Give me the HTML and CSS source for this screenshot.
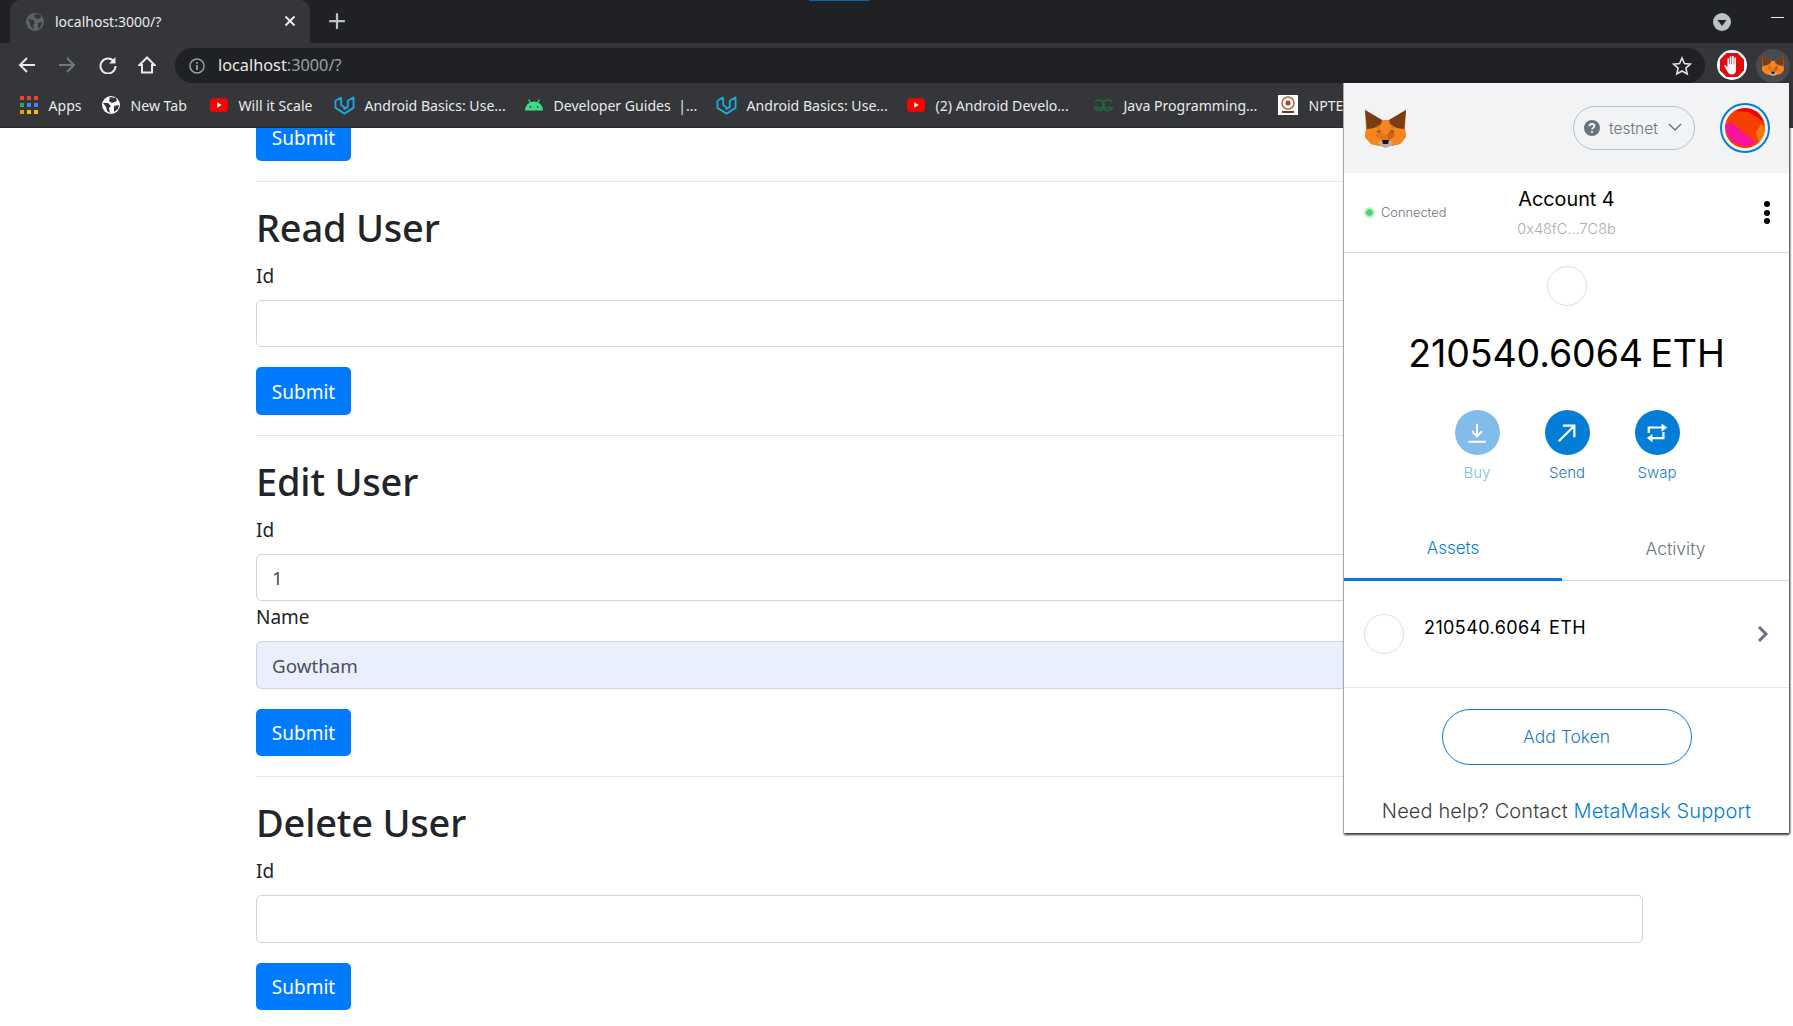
FILE: index.html
```html
<!DOCTYPE html>
<html lang="en">
<head>
<meta charset="utf-8">
<title>localhost:3000/?</title>
<link rel="stylesheet" href="styles.css">
</head>
<body>
<svg class="defs" width="0" height="0" aria-hidden="true">
  <symbol id="fox" viewBox="0 0 41 39">
    <polygon fill="#e2761b" points="0,1 17,11 24,11 41,1 40,20 41,28 35,35 26,37 15,37 6,35 0,28 1,20"/>
    <polygon fill="#f6851b" points="17,11 24,11 27,20 22,26 19,26 14,20"/>
    <polygon fill="#f6851b" points="1,21 11,18 14,21 11,27 17,31 15,37 6,35 0,28"/>
    <polygon fill="#f6851b" points="40,21 30,18 27,21 30,27 24,31 26,37 35,35 41,28"/>
    <polygon fill="#763d16" points="0,1 17,11 16,15 9,19 2,20"/>
    <polygon fill="#763d16" points="41,1 24,11 25,15 32,19 39,20"/>
    <polygon fill="#e4761b" points="11,27 17,31 19,26 14,20"/>
    <polygon fill="#cd6116" points="30,27 24,31 22,26 27,20"/>
    <polygon fill="#a05a22" points="11,22 15,21 16,23 13,24"/>
    <polygon fill="#a05a22" points="30,22 26,21 25,23 28,24"/>
    <polygon fill="#c0ad9e" points="13,33 17,31 24,31 28,33 26,37 20.500,39 15,37"/>
    <polygon fill="#161616" points="17,31 24,31 23,35 18,35"/>
  </symbol>
  <symbol id="yt" viewBox="0 0 20 16">
    <rect width="20" height="15" y=".5" rx="4" fill="#f00"/>
    <polygon points="8,5 8,11 13,8" fill="#fff"/>
  </symbol>
  <symbol id="uda" viewBox="0 0 22 20">
    <path d="M7.500 1.500L1.500 5v7.500L11 18.500l9.500-6V1.500l-6 3.500v6.500L10 14M7.500 1.500v8L12 13" fill="none" stroke="#1ba8d6" stroke-width="2" stroke-linejoin="round"/>
  </symbol>
</svg>

<header class="chrome">
  <div class="accent"></div>
  <div class="tabstrip">
    <div class="tab">
      <svg class="tab-fav" viewBox="0 0 18 18"><circle cx="9" cy="9" r="9" fill="#5f6368"/><path d="M2 6l5 1 2 3-2 2 1 4-3-2-1-4zM9 1l5 1 1 3-4 1-3-2zM12 10l4-1-1 4-3 3z" fill="#35363a"/></svg>
      <span class="tab-title">localhost:3000/?</span>
      <svg class="tab-close" viewBox="0 0 12 12"><path d="M1.500 1.500l9 9M10.500 1.500l-9 9" stroke="#e8eaed" stroke-width="2"/></svg>
    </div>
    <svg class="new-tab" viewBox="0 0 16 16"><path d="M8 1v14M1 8h14" stroke="#bdc1c6" stroke-width="2"/></svg>
    <svg class="tab-search" viewBox="0 0 18 18"><circle cx="9" cy="9" r="9" fill="#bdc1c6"/><polygon points="4.500,7 13.500,7 9,13" fill="#202124"/></svg>
    <div class="minimize"></div>
  </div>
  <div class="strip"></div>
  <div class="toolbar">
    <svg class="nav" viewBox="0 0 18 18"><path d="M17 9H3M9 2L2 9l7 7" fill="none" stroke="#e8eaed" stroke-width="2"/></svg>
    <svg class="nav" viewBox="0 0 18 18"><path d="M1 9h14M9 2l7 7-7 7" fill="none" stroke="#74777b" stroke-width="2"/></svg>
    <svg class="nav" viewBox="0 0 18 18"><path d="M15 5.500A7.500 7.500 0 1 0 16.500 10" fill="none" stroke="#e8eaed" stroke-width="2"/><polygon points="16.500,1 16.500,7.500 10,7.500" fill="#e8eaed"/></svg>
    <svg class="nav" viewBox="0 0 18 18"><path d="M9 1.500L1.500 9H4v7.500h10V9h2.500z" fill="none" stroke="#e8eaed" stroke-width="2"/></svg>
    <div class="omnibox">
      <svg class="info" viewBox="0 0 16 16"><circle cx="8" cy="8" r="7" fill="none" stroke="#9aa0a6" stroke-width="1.500"/><path d="M8 7v5M8 4v1.800" stroke="#9aa0a6" stroke-width="1.800"/></svg>
      <span class="url">localhost<span class="url-dim">:3000/?</span></span>
      <svg class="star" viewBox="0 0 20 20"><polygon points="10,2 12.400,7.500 18.400,8.100 13.900,12.100 15.200,18 10,15 4.800,18 6.100,12.100 1.600,8.100 7.600,7.500" fill="none" stroke="#e0e2e5" stroke-width="1.600"/></svg>
    </div>
    <svg class="ext-ab" viewBox="0 0 30 30">
      <circle cx="15" cy="15" r="15" fill="#fff"/>
      <polygon points="9.500,3 20.500,3 27,9.500 27,20.500 20.500,27 9.500,27 3,20.500 3,9.500" fill="#e20c0c"/>
      <path d="M10.500 8.500h1.600v6h.6V6.500h1.700v8h.6V6h1.700v8.500h.6V7.500h1.700V20c0 3-1.700 4.500-4.300 4.500-2.300 0-3.500-1.200-4.400-3.200L7 15.500l1.400-.7 2.100 3z" fill="#fff"/>
    </svg>
    <div class="ext-fox"><svg viewBox="0 0 41 39"><use href="#fox"/></svg></div>
  </div>
  <nav class="bookmarks">
    <div class="bm">
      <svg class="bm-ico" viewBox="0 0 18 18">
        <g fill="#ea4335"><rect width="4" height="4"/><rect x="7" width="4" height="4"/><rect x="14" width="4" height="4"/></g>
        <g fill="#4285f4"><rect y="7" width="4" height="4" fill="#34a853"/><rect x="7" y="7" width="4" height="4"/><rect x="14" y="7" width="4" height="4"/></g>
        <g fill="#fbbc04"><rect y="14" width="4" height="4" fill="#f29900"/><rect x="7" y="14" width="4" height="4"/><rect x="14" y="14" width="4" height="4"/></g>
      </svg>
      <span>Apps</span>
    </div>
    <div class="bm">
      <svg class="bm-ico" viewBox="0 0 18 18"><circle cx="9" cy="9" r="9" fill="#fff"/><path d="M1 7l5 0 3 3-2 2 1 5-3-2-1-4zM8 1l6 1 1 3-5 2-3-2zM12 10l5-1-1 4-4 3z" fill="#35363a"/></svg>
      <span>New Tab</span>
    </div>
    <div class="bm"><svg class="bm-ico" viewBox="0 0 20 16"><use href="#yt"/></svg><span>Will it Scale</span></div>
    <div class="bm"><svg class="bm-ico bm-wide" viewBox="0 0 22 20"><use href="#uda"/></svg><span>Android Basics: Use...</span></div>
    <div class="bm">
      <svg class="bm-ico" viewBox="0 0 20 14"><path d="M0 13a10 10 0 0 1 20 0z" fill="#3ddc84"/><path d="M4 1l3 5M16 1l-3 5" stroke="#3ddc84" stroke-width="1.300"/><circle cx="6" cy="9" r="1" fill="#35363a"/><circle cx="14" cy="9" r="1" fill="#35363a"/></svg>
      <span>Developer Guides&nbsp; |...</span>
    </div>
    <div class="bm"><svg class="bm-ico bm-wide" viewBox="0 0 22 20"><use href="#uda"/></svg><span>Android Basics: Use...</span></div>
    <div class="bm"><svg class="bm-ico" viewBox="0 0 20 16"><use href="#yt"/></svg><span>(2) Android Develo...</span></div>
    <div class="bm">
      <svg class="bm-ico bm-wide" viewBox="0 0 22 14"><path d="M2 3.500A5.500 5.500 0 1 1 1.500 9H9M20 3.500A5.500 5.500 0 1 0 20.500 9H13" fill="none" stroke="#1c6b41" stroke-width="1.600"/></svg>
      <span>Java Programming...</span>
    </div>
    <div class="bm">
      <svg class="bm-ico bm-square" viewBox="0 0 20 20"><rect width="20" height="20" fill="#fff"/><circle cx="10" cy="8" r="6" fill="none" stroke="#a4682f" stroke-width="1.500"/><circle cx="10" cy="8" r="2.500" fill="#b33a3a"/><rect x="4" y="16" width="12" height="2" fill="#8a2b2b"/></svg>
      <span>NPTEL</span>
    </div>
  </nav>
</header>

<main class="page">
  <form class="user-form user-form-first">
    <button type="button" class="btn">Submit</button>
  </form>
  <hr class="rule">
  <form class="user-form">
    <h2 class="title">Read User</h2>
    <label class="field-label">Id</label>
    <input class="field field-last" type="text">
    <button type="button" class="btn">Submit</button>
  </form>
  <hr class="rule">
  <form class="user-form">
    <h2 class="title">Edit User</h2>
    <label class="field-label">Id</label>
    <input class="field" type="text" value="1">
    <label class="field-label">Name</label>
    <input class="field field-last field-auto" type="text" value="Gowtham">
    <button type="button" class="btn">Submit</button>
  </form>
  <hr class="rule">
  <form class="user-form">
    <h2 class="title">Delete User</h2>
    <label class="field-label">Id</label>
    <input class="field field-last" type="text">
    <button type="button" class="btn">Submit</button>
  </form>
</main>

<aside class="mm">
  <div class="mm-head">
    <svg class="mm-logo" viewBox="0 0 41 39"><use href="#fox"/></svg>
    <div class="mm-net">
      <svg class="mm-q" viewBox="0 0 16 16"><circle cx="8" cy="8" r="8" fill="#6a737d"/><path d="M5.500 6.200C5.500 4.800 6.600 4 8 4s2.500.8 2.500 2.100c0 1.800-2.500 1.600-2.500 3.400" fill="none" stroke="#f2f3f4" stroke-width="1.800"/><circle cx="8" cy="12" r="1.100" fill="#f2f3f4"/></svg>
      <span>testnet</span>
      <svg class="mm-caret" viewBox="0 0 14 8"><path d="M1 1l6 6 6-6" fill="none" stroke="#6a737d" stroke-width="1.400"/></svg>
    </div>
    <div class="mm-avatar">
      <svg viewBox="0 0 40 40"><circle cx="20" cy="20" r="20" fill="#f73f05"/><path d="M10 3A20 20 0 0 1 39 14L24 4z" fill="#f0000a"/><path d="M36 16l4 4a20 20 0 0 1-6 14l-3-9z" fill="#f27a0a"/><path d="M.5 16l6.500-1 24 20a20 20 0 0 1-30.500-19z" fill="#f5149b"/></svg>
    </div>
  </div>
  <div class="mm-account">
    <div class="mm-conn"><i class="mm-dot"></i>Connected</div>
    <div class="mm-id">
      <div class="mm-name">Account 4</div>
      <div class="mm-addr">0x48fC...7C8b</div>
    </div>
    <div class="mm-more"><i></i><i></i><i></i></div>
  </div>
  <div class="mm-balance">
    <div class="mm-token"></div>
    <div class="mm-amount">210540.6064 ETH</div>
    <div class="mm-actions">
      <div class="mm-act mm-act-off">
        <div class="mm-round"><svg viewBox="0 0 24 24"><path d="M12 2v13M6.500 10l5.500 5.500 5.500-5.500M2.500 21.500h19" fill="none" stroke="#fff" stroke-width="2.200"/></svg></div>
        <span>Buy</span>
      </div>
      <div class="mm-act">
        <div class="mm-round"><svg viewBox="0 0 24 24"><path d="M3 21L20 4M7.500 4H20v12.500" fill="none" stroke="#fff" stroke-width="2.400"/></svg></div>
        <span>Send</span>
      </div>
      <div class="mm-act">
        <div class="mm-round"><svg viewBox="0 0 24 24"><path d="M3 12V6h15M3 17.500h16V11" fill="none" stroke="#fff" stroke-width="2.400"/><polygon points="17,1.500 23,6 17,10.500" fill="#fff"/><polygon points="7,13 1,17.500 7,22" fill="#fff"/></svg></div>
        <span>Swap</span>
      </div>
    </div>
  </div>
  <div class="mm-tabs">
    <div class="mm-tab mm-tab-on">Assets</div>
    <div class="mm-tab">Activity</div>
  </div>
  <div class="mm-asset">
    <div class="mm-token"></div>
    <div class="mm-asset-text">210540.6064 ETH</div>
    <svg class="mm-chev" viewBox="0 0 12 18"><path d="M2 2l7 7-7 7" fill="none" stroke="#6a737d" stroke-width="3"/></svg>
  </div>
  <div class="mm-add">Add Token</div>
  <div class="mm-help">Need help? Contact <span class="mm-link">MetaMask Support</span></div>
</aside>
</body>
</html>
```
FILE: styles.css
```css
* { box-sizing: border-box; }
html, body { margin: 0; height: 100%; }
body {
  width: 1793px;
  height: 1026px;
  overflow: hidden;
  background: #fff;
  font-family: "Noto Sans", "Open Sans", sans-serif;
  position: relative;
}
.defs { position: absolute; }

/* browser chrome */
.chrome { background: #202124; color: #e8eaed; position: relative; z-index: 1; }
.accent { position: absolute; left: 809px; top: 0; width: 60px; height: 1px; background: #0a66ad; }
.tabstrip { height: 43px; display: flex; align-items: center; padding-left: 10px; }
.tab {
  width: 300px;
  height: 43px;
  background: #35363a;
  border-radius: 10px 10px 0 0;
  display: flex;
  align-items: center;
  padding-left: 16px;
  font-size: 14px;
}
.tab-fav { width: 18px; height: 18px; }
.tab-title { margin-left: 11px; flex: 1; margin-top: -1px; }
.tab-close { width: 12px; height: 12px; margin-right: 14px; margin-top: -1px; }
.new-tab { width: 18px; height: 18px; margin-left: 18px; margin-top: -1px; }
.tab-search { width: 18px; height: 18px; margin-left: auto; margin-right: 40px; }
.minimize { width: 13px; height: 1px; background: #e8eaed; margin-right: 9px; margin-bottom: 8px; }
.strip { height: 5px; background: #35363a; }
.toolbar { height: 35px; background: #35363a; display: flex; align-items: center; padding-left: 18px; }
.nav { width: 18px; height: 18px; margin-right: 22px; flex: none; margin-top: -1px; }
.nav:nth-child(3) { margin-left: 1px; margin-right: 21px; }
.omnibox {
  width: 1530px;
  height: 35px;
  margin-left: -3px;
  background: #202124;
  border-radius: 18px;
  display: flex;
  align-items: center;
  padding: 0 13px 0 14px;
  font-size: 16.300px;
}
.info { width: 16px; height: 16px; }
.url { margin-left: 13px; color: #e8eaed; flex: 1; margin-top: -1px; }
.url-dim { color: #9aa0a6; }
.star { width: 20px; height: 20px; }
.ext-ab { width: 30px; height: 30px; margin-left: 12px; flex: none; margin-top: -1px; }
.ext-fox {
  width: 34px;
  height: 34px;
  margin-left: 9px;
  border-radius: 50%;
  background: #4a4b4e;
  display: flex;
  align-items: center;
  justify-content: center;
  flex: none;
}
.ext-fox svg { width: 22px; height: 21px; }
.bookmarks {
  height: 45px;
  background: #35363a;
  display: grid;
  grid-template-columns: 82px 108px 124px 191px 191px 191px 186px 185px 200px;
  padding-left: 20px;
  align-items: center;
  font-size: 14.100px;
  border-bottom: 1px solid #27282b;
}
.bm { display: flex; align-items: center; gap: 10.500px; white-space: nowrap; }
.bm-ico { width: 18px; height: 18px; flex: none; }
.bm-wide { width: 21px; height: 19px; margin-right: -1px; }
.bm-square { width: 20px; height: 20px; }

/* page */
.page { padding-left: 256px; width: 1643px; overflow: hidden; height: 897px; }
.user-form { display: flex; flex-direction: column; }
.user-form-first { margin-top: -15px; }
.rule { margin: 20px 0; border: 0; border-top: 1px solid rgba(0, 0, 0, .1); height: 0; }
.title {
  margin: 0 0 9px;
  padding-top: 1px;
  font-size: 38px;
  line-height: 48px;
  font-weight: 500;
  color: #212529;
  letter-spacing: -.2px;
}
.field-label { font-size: 19px; line-height: 28px; padding-top: 2px; margin-bottom: 10px; color: #212529; }
.field {
  height: 47.5px;
  width: 100%;
  padding: 2px 15px 0;
  font: 18.800px "Noto Sans", "Open Sans", sans-serif;
  color: #495057;
  background: #fff;
  border: 1px solid #ced4da;
  border-radius: 5px;
  outline: 0;
}
.field-last { margin-bottom: 20px; }
.field-auto { background: #e8f0fe; }
.btn {
  align-self: flex-start;
  width: 95px;
  height: 47.5px;
  padding: 2px 0 0;
  border: 0;
  border-radius: 5px;
  background: #007bff;
  color: #fff;
  font: 19px "Noto Sans", "Open Sans", sans-serif;
}

/* metamask popup */
.mm {
  position: absolute;
  left: 1344px;
  top: 83px;
  width: 445px;
  height: 750px;
  background: #fff;
  z-index: 2;
  font-family: Inter, "Noto Sans", sans-serif;
  box-shadow: -1px 0 0 #a9a9a9, 1px 1px 2px #333, 0 2px 2px rgba(0, 0, 0, .6);
  display: flex;
  flex-direction: column;
}
.mm-head { height: 90px; background: #f2f3f4; display: flex; align-items: center; padding: 0 19px 0 21px; flex: none; }
.mm-logo { width: 41px; height: 39px; }
.mm-net {
  margin-left: auto;
  width: 122px;
  height: 44px;
  border: 1px solid #bbc0c5;
  border-radius: 22px;
  display: flex;
  align-items: center;
  padding-left: 10px;
  font-size: 15.500px;
  font-weight: 300;
  color: #6a737d;
}
.mm-q { width: 16px; height: 16px; margin-right: 9px; }
.mm-caret { width: 14px; height: 8px; margin-left: 10px; margin-top: -2px; }
.mm-avatar {
  width: 50px;
  height: 50px;
  margin-left: 25px;
  border: 2px solid #037dd6;
  border-radius: 50%;
  padding: 3px;
}
.mm-avatar svg { width: 40px; height: 40px; display: block; }
.mm-account {
  height: 80px;
  border-bottom: 1px solid #d6d9dc;
  display: grid;
  grid-template-columns: 1fr auto 1fr;
  align-items: center;
  padding: 0 20px;
  flex: none;
}
.mm-conn { display: flex; align-items: center; gap: 6px; font-size: 12.800px; font-weight: 300; color: #6a737d; }
.mm-dot { width: 11px; height: 11px; border-radius: 50%; background: #4fcf6f; border: 2px solid #c3eecd; background-clip: padding-box; }
.mm-id { text-align: center; }
.mm-name { font-size: 19.800px; line-height: 24px; color: #000; font-weight: 400; }
.mm-addr { font-size: 14.500px; line-height: 20px; margin-top: 8px; color: #a8acb0; font-weight: 300; }
.mm-more { justify-self: end; display: flex; flex-direction: column; gap: 2.500px; margin-right: -1px; }
.mm-more i { width: 6px; height: 6px; border-radius: 50%; background: #000; display: block; }
.mm-token { width: 40px; height: 40px; border: 1px solid #dedede; border-radius: 50%; flex: none; }
.mm-balance { display: flex; flex-direction: column; align-items: center; padding-top: 13px; height: 275px; flex: none; }
.mm-amount { font-size: 37.500px; line-height: 50px; color: #000; margin-top: 23px; white-space: nowrap; word-spacing: -3px; font-weight: 400; letter-spacing: -.1px; }
.mm-actions { display: flex; margin-top: 31px; padding-left: 1px; }
.mm-act { width: 90px; display: flex; flex-direction: column; align-items: center; color: #1a7cc9; font-size: 15px; line-height: 20px; font-weight: 300; }
.mm-act span { margin-top: 8px; }
.mm-act-off { color: #81bfeb; }
.mm-round { width: 45px; height: 45px; border-radius: 50%; background: #037dd6; display: flex; align-items: center; justify-content: center; }
.mm-round svg { width: 22px; height: 22px; }
.mm-act-off .mm-round { background: #81bceb; }
.mm-tabs { display: flex; height: 65px; flex: none; border-bottom: 1px solid #d6d9dc; margin-top: -12px; }
.mm-tab { flex: 1; display: flex; align-items: center; justify-content: center; font-size: 17.500px; font-weight: 300; color: #6a737d; }
.mm-tab-on { flex: 0 0 218px; color: #037dd6; border-bottom: 3px solid #037dd6; margin-bottom: -1px; padding-top: 1px; font-size: 17px; }
.mm-asset {
  height: 107px;
  border-bottom: 1px solid #e4e6e8;
  display: flex;
  align-items: center;
  padding: 0 20px;
  flex: none;
}
.mm-asset-text { margin-left: 20px; font-size: 18px; font-weight: 400; color: #000; margin-top: -14px; letter-spacing: .4px; word-spacing: 2px; }
.mm-chev { width: 12px; height: 18px; margin-left: auto; }
.mm-add {
  width: 250px;
  height: 56px;
  margin: 21px auto 0;
  border: 1px solid #037dd6;
  border-radius: 28px;
  display: flex;
  align-items: center;
  justify-content: center;
  color: #1a7cc9;
  font-size: 17.500px;
  font-weight: 300;
  flex: none;
  padding-bottom: 2px;
}
.mm-help { text-align: center; font-size: 20px; font-weight: 300; color: #3d3d3d; margin-top: 34px; white-space: nowrap; letter-spacing: .1px; }
.mm-link { color: #037dd6; }
```
